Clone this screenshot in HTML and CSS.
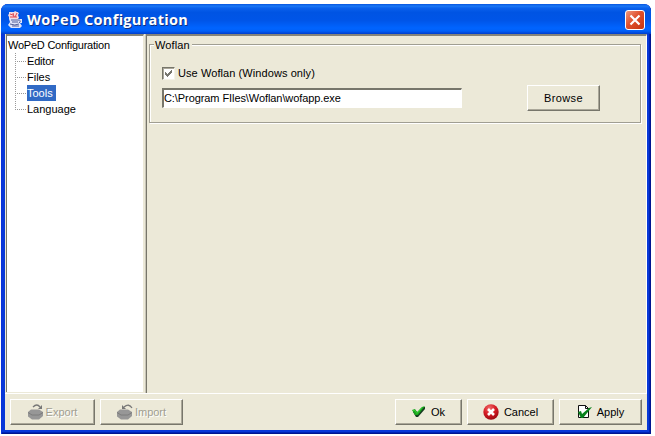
FILE: index.html
```html
<!DOCTYPE html>
<html lang="en">
<head>
<meta charset="utf-8">
<title>WoPeD Configuration</title>
<link rel="stylesheet" href="styles.css">
</head>
<body>
<div class="window">
  <header class="titlebar">
    <svg class="logo" width="17" height="17" viewBox="0 0 17 17">
      <path d="M2 1h9v7h4v4h-2l2 3-2 2H4l-3-3 2-3-1-3z" fill="#dfe5fa"/>
      <path d="M1 4l3-3 2 1 2-2 4 2-1 2 1 3-3 2-2-2-2 1-3-2z" fill="#fbdada"/>
      <path d="M3 3l3 1M6 2l1 4M10 2L8 6M3 6h7" stroke="#dc4650" fill="none"/>
      <path d="M4 9h7M5 11h6M3 13q5 2 9 0M5 15h7M11 9q4 0 1 3" stroke="#526099" fill="none"/>
    </svg>
    <h1 class="title">WoPeD Configuration</h1>
    <button class="close" aria-label="Close">
      <svg width="18" height="18" viewBox="0 0 18 18"><path d="M4.500 4.500l9 9M13.500 4.500l-9 9" stroke="#fff" stroke-width="2.200"/></svg>
    </button>
  </header>
  <main class="body">
    <div class="split">
      <nav class="tree">
        <div class="root"><span class="t-root">WoPeD Configuration</span></div>
        <ul class="nodes">
          <li><span class="node t-editor">Editor</span></li>
          <li><span class="node">Files</span></li>
          <li><span class="node selected">Tools</span></li>
          <li><span class="node">Language</span></li>
        </ul>
      </nav>
      <section class="pane">
        <fieldset class="group">
          <legend>Woflan</legend>
          <label class="check">
            <span class="box"><svg width="9" height="9" viewBox="0 0 9 9" shape-rendering="crispEdges"><path d="M1 3h1v1h1v1h1v-1h1v-1h1v-1h1v-1h1v3h-1v1h-1v1h-1v1h-1v1h-1v-1h-1v-1h-1z" fill="#77766f"/></svg></span>
            <span class="t-use">Use Woflan (Windows only)</span>
          </label>
          <div class="row">
            <div class="field"><span class="t-path">C:\Program FIles\Woflan\wofapp.exe</span></div>
            <button class="btn browse"><span class="t-browse">Browse</span></button>
          </div>
        </fieldset>
      </section>
    </div>
    <footer class="bar">
      <button class="btn export off">
        <svg width="16" height="17" viewBox="0 0 16 17"><path d="M0 9l3-2.500h8L15 9v4l-4 3.500H4L0 13.500z" fill="#979797"/><path d="M0 9.500L4 12h7l4-2.500" stroke="#7c7c7c" fill="none"/><path d="M5 4q4-4 7 0" stroke="#777" stroke-width="1.300" fill="none"/><path d="M14 2v4h-4z" fill="#777"/></svg>
        <span>Export</span>
      </button>
      <button class="btn import off">
        <svg width="16" height="17" viewBox="0 0 16 17"><path d="M0 9l3-2.500h8L15 9v4l-4 3.500H4L0 13.500z" fill="#979797"/><path d="M0 9.500L4 12h7l4-2.500" stroke="#7c7c7c" fill="none"/><path d="M15 5q-3-5-8-1" stroke="#777" stroke-width="1.300" fill="none"/><path d="M5 2v4h4z" fill="#777"/></svg>
        <span>Import</span>
      </button>
      <button class="btn ok">
        <svg width="14" height="12" viewBox="0 0 14 12"><path d="M1 6l3-1 2 2 5-6 2 0v2L6 11H4z" fill="#163c20"/><path d="M0 4l3-1 2 3 5-5 3-1-7 9H3z" fill="#18a51d"/><path d="M1 4.500l2 0 2 3 5-6" stroke="#35cc35" fill="none"/></svg>
        <span>Ok</span>
      </button>
      <button class="btn cancel">
        <svg width="16" height="16" viewBox="0 0 16 16"><defs><radialGradient id="r" cx=".4" cy=".25" r=".8"><stop offset="0" stop-color="#ef6b6b"/><stop offset=".5" stop-color="#d61c24"/><stop offset="1" stop-color="#950710"/></radialGradient></defs><circle cx="8" cy="8" r="7.700" fill="url(#r)"/><path d="M5 5l6 6M11 5l-6 6" stroke="#fff" stroke-width="2.600"/></svg>
        <span>Cancel</span>
      </button>
      <button class="btn apply">
        <svg width="15" height="15" viewBox="0 0 15 15"><path d="M1.500 1.500h7l3 3v9h-10z" fill="#fff" stroke="#111"/><path d="M8.500 1.500v3h3" fill="none" stroke="#111"/><path d="M1 8l3-1 1 3 7-6 3-1L6 14H4z" fill="#08811b"/></svg>
        <span>Apply</span>
      </button>
    </footer>
  </main>
</div>
</body>
</html>
```
FILE: styles.css
```css
* { box-sizing: border-box; }
body { margin: 0; padding: 4px 0 0 1px; background: #fff; color: #000; font: 11px/16px "Liberation Sans", Arial, sans-serif; overflow: hidden; }
button { font: inherit; color: inherit; }
span { white-space: nowrap; }
.window { width: 650px; height: 430px; padding: 0 4px 4px; border-radius: 7px 7px 0 0; background: #0838d8; box-shadow: inset 1px 0 #0831d9, inset -1px -1px #001590, inset -2px -2px #0024b5; }
.titlebar { height: 30px; margin: 0 -4px; padding: 1px 6px 0 6px; display: flex; align-items: center; border-radius: 7px 7px 0 0; background: linear-gradient(#0755df 0, #1b78f5 7%, #0a60ec 14%, #0054e3 28%, #0055e8 55%, #0064ff 80%, #0060f8 90%, #003dcc 100%); }
.logo { margin-top: -1px; }
.title { margin: 0 0 0 3px; flex: 1; font: bold 14.500px/20px "Open Sans", "Noto Sans", sans-serif; color: #fff; text-shadow: 1px 1px #103080; white-space: nowrap; letter-spacing: .31px; }
.close { width: 20px; height: 20px; padding: 0; border: 1px solid #fff; border-radius: 3px; background: linear-gradient(135deg, #f09a80, #e0502c 45%, #c53410); display: flex; }
.body { width: 642px; height: 396px; display: flex; flex-direction: column; background: #ece9d8; }
.split { height: 360px; display: flex; border-bottom: 1px solid #fff; }
.tree { width: 138px; height: 358px; margin-left: 1px; background: #fff; border-left: 1px solid #77766b; border-top: 2px solid #85847a; border-right: 1px solid #ece9d8; padding-top: 1px; }
.root { height: 16px; padding-left: 1px; }
.t-root { letter-spacing: -.23px; }
.nodes { margin: 0; padding: 0 0 0 8px; list-style: none; }
.nodes li { height: 16px; display: flex; align-items: center; background: repeating-linear-gradient(90deg, #999 0 1px, transparent 1px 2px) 0 8px / 12px 1px no-repeat, repeating-linear-gradient(#999 0 1px, transparent 1px 2px) 0 0 / 1px 16px no-repeat; }
.nodes li:last-child { background-size: 12px 1px, 1px 9px; }
.node { margin-left: 12px; height: 16px; padding: 0 1px 0 0; }
.t-editor { letter-spacing: -.2px; }
.selected { padding: 0 3px 0 0; background: #316ac5; color: #fff; }
.pane { flex: 1; margin-left: 2px; padding: 4px 5px 0 2px; border-left: 1px solid #77766b; border-top: 2px solid #85847a; border-right: 1px solid #fff; box-shadow: -1px 0 #c8c5b7; }
.group { position: relative; height: 79px; margin: 4px 0 0; padding: 0; border: 1px solid #a09e92; box-shadow: inset 1px 1px #fff, 1px 1px #fff; }
.group legend { position: absolute; left: 4px; top: -8px; padding: 0 2px 0 1px; line-height: 16px; background: #ece9d8; letter-spacing: .1px; }
.check { display: flex; align-items: center; height: 16px; margin: 20px 0 0 12px; }
.box { width: 13px; height: 13px; margin-right: 3px; padding: 1px 0 0 1px; display: flex; background: #fff; border: 1px solid #77766b; border-right-color: #f4f2e8; border-bottom-color: #f4f2e8; box-shadow: inset 1px 1px #aaa799; }
.t-use { letter-spacing: .08px; }
.row { display: flex; align-items: center; margin: 4px 0 0 12px; }
.field { width: 300px; height: 20px; line-height: 17px; background: #fff; border: 1px solid #fff; border-top: 2px solid #77766b; border-left: 2px solid #77766b; }
.t-path { letter-spacing: -.08px; }
.browse { width: 73px; height: 26px; margin-left: 65px; }
.t-browse { letter-spacing: .4px; }
.btn { padding: 0; display: flex; align-items: center; justify-content: center; line-height: 16px; background: #ece9d8; border: 1px solid #fff; border-right: 1px solid #77766b; border-bottom: 1px solid #77766b; box-shadow: inset -1px -1px #aaa799; }
.bar { height: 36px; padding: 5px 5px 0; display: flex; align-items: flex-start; }
.bar .btn { height: 26px; }
.export { width: 85px; margin-right: 5px; }
.import { width: 83px; }
.off { color: #a09e91; text-shadow: 1px 1px #fff; }
.bar .off { gap: 2px; }
.off svg { margin-top: -2px; }
.ok { width: 67px; margin: 0 5px 0 auto; }
.cancel { width: 87px; margin-right: 5px; }
.bar .ok, .bar .cancel, .bar .apply { gap: 5px; }
.bar .ok svg, .bar .cancel svg, .bar .apply svg { margin-top: -1px; }
.apply { width: 83px; }
```
